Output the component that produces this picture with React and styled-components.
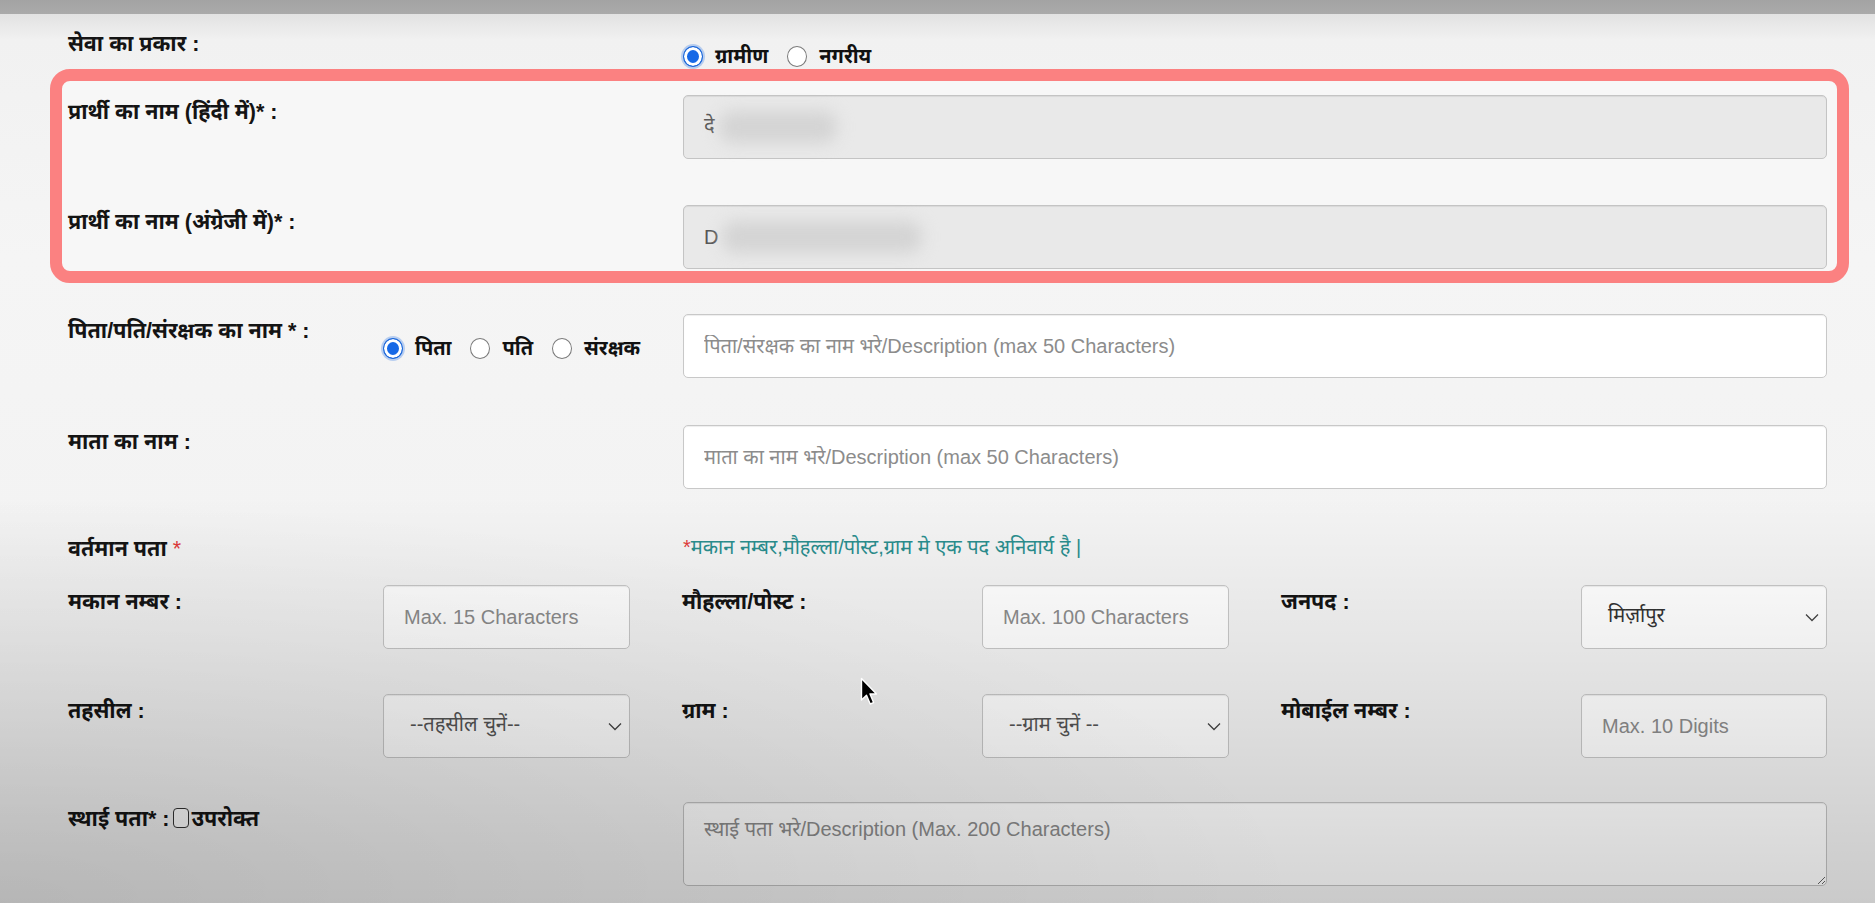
import React from "react";
import styled, { createGlobalStyle } from "styled-components";

const GlobalStyle = createGlobalStyle`
  html, body {
    margin: 0;
    padding: 0;
  }
  body {
    font-family: "Liberation Sans", "Noto Sans Devanagari", "Noto Sans", sans-serif;
    color: #111;
    background: #f4f4f4;
  }
  * {
    box-sizing: border-box;
  }
`;

const Page = styled.div`
  position: relative;
  width: 1875px;
  height: 903px;
  overflow: hidden;
  background: linear-gradient(to bottom, #e2e2e2 14px, #f1f1f1 40px, #f5f5f5 260px, #f3f3f3 520px);

  &::after {
    content: "";
    position: absolute;
    inset: 0;
    pointer-events: none;
    background:
      radial-gradient(ellipse 70% 45% at 0% 100%, rgba(0, 0, 0, 0.1), rgba(0, 0, 0, 0)),
      linear-gradient(to bottom, rgba(0, 0, 0, 0) 55%, rgba(0, 0, 0, 0.06) 72%, rgba(0, 0, 0, 0.17) 100%);
  }
`;

const TopBar = styled.div`
  height: 14px;
  background: linear-gradient(to bottom, #a3a3a3, #aaaaaa);
`;

const Form = styled.div`
  padding: 13px 48px 0 68px;
`;

const Row = styled.div`
  display: grid;
  grid-template-columns: 315px 300px 1fr;
  height: ${(p) => (p.$height ? `${p.$height}px` : "auto")};
  margin-bottom: ${(p) => p.$gap || 0}px;
`;

const Label = styled.div`
  font-size: 21.5px;
  font-weight: 700;
  line-height: 24px;
  padding-top: 5px;
  white-space: nowrap;
  grid-column: ${(p) => (p.$wide ? "1 / 3" : "auto")};
  padding-left: ${(p) => p.$inset || 0}px;
  color: #141414;
`;

const Star = styled.span`
  color: #e03a3a;
  font-weight: 400;
`;

const Highlight = styled.div`
  margin: 0 -22px 31px -18px;
  border: 12px solid #fb8181;
  border-radius: 20px;
  padding: 14px 10px 2px 6px;
  background: #f7f7f7;
`;

const RadioGroup = styled.div`
  display: flex;
  align-items: center;
  gap: 19px;
  grid-column: ${(p) => p.$col};
  align-self: ${(p) => p.$align || "center"};
  padding-bottom: ${(p) => p.$pb || 0}px;
  padding-top: ${(p) => p.$pt || 0}px;
`;

const RadioItem = styled.label`
  display: flex;
  align-items: center;
  gap: 12px;
  font-size: 20px;
  font-weight: 700;
  line-height: 24px;
`;

const RadioDot = styled.span`
  width: 20px;
  height: 21px;
  border-radius: 50%;
  flex-shrink: 0;
  background: ${(p) => (p.$checked ? "#1769e6" : "#fff")};
  border: ${(p) => (p.$checked ? "1.5px solid #1a66d8" : "1px solid #7a7a7a")};
  box-shadow: ${(p) =>
    p.$checked
      ? "inset 0 0 0 3px #fff, 0 0 0 2px rgba(110, 160, 235, 0.45)"
      : "none"};
`;

const TextInput = styled.input`
  grid-column: ${(p) => p.$col || "auto"};
  width: 100%;
  height: 64px;
  padding: 0 20px;
  font-family: inherit;
  font-size: 20px;
  color: #333;
  background: #fff;
  border: 1px solid #c8c8c8;
  border-radius: 5px;
  box-shadow: inset 0 1px 1px rgba(0, 0, 0, 0.07);
  outline: none;

  &::placeholder {
    color: #8c8c8c;
  }
`;

const NameField = styled.div`
  grid-column: 3;
  height: 64px;
  display: flex;
  align-items: center;
  padding: 0 20px;
  font-size: 20px;
  color: #555;
  background: #e9e9e9;
  border: 1px solid #c4c4c4;
  border-radius: 5px;
  box-shadow: inset 0 1px 1px rgba(0, 0, 0, 0.07);
`;

const Blur = styled.span`
  display: inline-block;
  width: ${(p) => p.$w}px;
  height: 32px;
  margin-left: 4px;
  border-radius: 14px;
  background: #d4d4d4;
  filter: blur(8px);
`;

const Note = styled.div`
  grid-column: 3;
  font-size: 20px;
  line-height: 24px;
  padding-top: 3px;
  color: #2a8d8d;
  white-space: nowrap;
`;

const AddressRow = styled.div`
  display: grid;
  grid-template-columns: 315px 247px 352px 247px 352px 246px;
  margin-bottom: ${(p) => p.$gap || 0}px;
`;

const SelectBox = styled.div`
  height: 64px;
  display: flex;
  align-items: center;
  justify-content: space-between;
  padding: 0 7px 0 26px;
  font-size: 20px;
  color: ${(p) => (p.$value ? "#333" : "#555")};
  background: #fff;
  border: 1px solid #c8c8c8;
  border-radius: 5px;
  box-shadow: inset 0 1px 1px rgba(0, 0, 0, 0.07);
`;

const TextArea = styled.textarea`
  grid-column: 3;
  height: 84px;
  padding: 14px 20px;
  font-family: inherit;
  font-size: 20px;
  line-height: 24px;
  background: #fff;
  border: 1px solid #c2c2c2;
  border-radius: 5px;
  box-shadow: inset 0 1px 1px rgba(0, 0, 0, 0.07);
  resize: vertical;
  outline: none;

  &::placeholder {
    color: #8c8c8c;
  }
`;

const CheckBox = styled.span`
  display: inline-block;
  width: 16px;
  height: 20px;
  margin: 0 2px 0 4px;
  vertical-align: -2px;
  border: 1.5px solid #333;
  border-radius: 4px;
  background: #fff;
`;

const Cursor = styled.svg`
  position: absolute;
  left: 860px;
  top: 677px;
  z-index: 2;
`;

const Chevron = () => (
  <svg width="14" height="9" viewBox="0 0 14 9">
    <path d="M1 1.5l6 6 6-6" fill="none" stroke="#444" strokeWidth="1.3" />
  </svg>
);

const Radio = ({ checked, children }) => (
  <RadioItem>
    <RadioDot $checked={checked} />
    {children}
  </RadioItem>
);

const Select = ({ value, children }) => (
  <SelectBox $value={value}>
    <span>{children}</span>
    <Chevron />
  </SelectBox>
);

const App = () => {
  return (
    <>
      <GlobalStyle />
      <Page>
        <TopBar />
        <Form>
          <Row $height={42}>
            <Label>सेवा का प्रकार :</Label>
            <RadioGroup $col={3} $align="end" $pb={1}>
              <Radio checked>ग्रामीण</Radio>
              <Radio>नगरीय</Radio>
            </RadioGroup>
          </Row>

          <Highlight>
            <Row $gap={46}>
              <Label>प्रार्थी का नाम (हिंदी में)* :</Label>
              <NameField>
                दे
                <Blur $w={118} />
              </NameField>
            </Row>
            <Row>
              <Label>प्रार्थी का नाम (अंग्रेजी में)* :</Label>
              <NameField>
                D
                <Blur $w={200} />
              </NameField>
            </Row>
          </Highlight>

          <Row $gap={47}>
            <Label>पिता/पति/संरक्षक का नाम * :</Label>
            <RadioGroup $col={2} $pt={4}>
              <Radio checked>पिता</Radio>
              <Radio>पति</Radio>
              <Radio>संरक्षक</Radio>
            </RadioGroup>
            <TextInput $col={3} placeholder="पिता/संरक्षक का नाम भरे/Description (max 50 Characters)" />
          </Row>

          <Row $gap={43}>
            <Label>माता का नाम :</Label>
            <TextInput $col={3} placeholder="माता का नाम भरे/Description (max 50 Characters)" />
          </Row>

          <Row $gap={24}>
            <Label $wide>
              वर्तमान पता <Star>*</Star>
            </Label>
            <Note>
              <Star>*</Star>मकान नम्बर,मौहल्ला/पोस्ट,ग्राम मे एक पद अनिवार्य है |
            </Note>
          </Row>

          <AddressRow $gap={45}>
            <Label>मकान नम्बर :</Label>
            <TextInput placeholder="Max. 15 Characters" />
            <Label $inset={52}>मौहल्ला/पोस्ट :</Label>
            <TextInput placeholder="Max. 100 Characters" />
            <Label $inset={52}>जनपद :</Label>
            <Select value>मिर्ज़ापुर</Select>
          </AddressRow>

          <AddressRow $gap={44}>
            <Label>तहसील :</Label>
            <Select>--तहसील चुनें--</Select>
            <Label $inset={52}>ग्राम :</Label>
            <Select>--ग्राम चुनें --</Select>
            <Label $inset={52}>मोबाईल नम्बर :</Label>
            <TextInput placeholder="Max. 10 Digits" />
          </AddressRow>

          <Row>
            <Label $wide>
              स्थाई पता* :<CheckBox />उपरोक्त
            </Label>
            <TextArea placeholder="स्थाई पता भरे/Description (Max. 200 Characters)" />
          </Row>
        </Form>

        <Cursor width="18" height="30" viewBox="0 0 18 30">
          <path
            d="M1.5 1.5 L1.5 23 L6.5 18.2 L10.2 27 L13.6 25.6 L10 17 L16.5 17 Z"
            fill="#000"
            stroke="#fff"
            strokeWidth="1.4"
            strokeLinejoin="round"
          />
        </Cursor>
      </Page>
    </>
  );
};

export default App;
